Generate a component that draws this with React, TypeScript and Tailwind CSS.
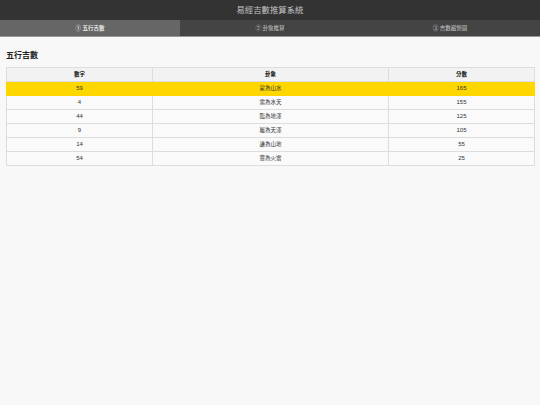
const TABS = ['① 五行吉數', '② 卦象推算', '③ 吉數趨勢圖'];

const ROWS = [
  { num: 59, gua: '蒙為山水', score: 165, top: true },
  { num: 4, gua: '需為水天', score: 155 },
  { num: 44, gua: '臨為地澤', score: 125 },
  { num: 9, gua: '履為天澤', score: 105 },
  { num: 14, gua: '謙為山地', score: 55 },
  { num: 54, gua: '豐為火雷', score: 25 },
];

const FONT = "font-['Liberation_Sans','Noto_Sans_CJK_TC',sans-serif]";

export default function App() {
  return (
    <div className={`${FONT} flex min-h-[405px] w-[540px] flex-col bg-[#f8f8f8]`}>
      <header className="flex h-5 items-center justify-center bg-[#333333] text-[8.4px] text-[#c4c4c4]">
        易經吉數推算系統
      </header>

      <nav className="grid h-[17px] grid-cols-3 border-b border-[#999999] bg-[#444444] text-[5.5px] text-[#c8c8c8]">
        {TABS.map((t, i) => (
          <div
            key={t}
            className={`flex items-center justify-center ${i === 0 ? 'bg-[#666666] font-bold text-[#e4e4e4]' : ''}`}
          >
            {t}
          </div>
        ))}
      </nav>

      <main className="px-[6px] pt-[13px]">
        <h2 className="text-[8px] leading-[11px] font-bold text-[#222222]">五行吉數</h2>

        <table className="mt-[6px] w-full table-fixed border-collapse border border-[#dddddd] text-center text-[5.5px] text-[#333333]">
          <colgroup>
            <col className="w-[146px]" />
            <col className="w-[236px]" />
            <col className="w-[146px]" />
          </colgroup>
          <thead>
            <tr className="h-[14px] bg-[#f2f2f2] font-bold text-[#111111]">
              <th className="border border-[#dddddd]">數字</th>
              <th className="border border-[#dddddd]">卦象</th>
              <th className="border border-[#dddddd]">分數</th>
            </tr>
          </thead>
          <tbody>
            {ROWS.map((r) => (
              <tr key={r.num} className={`h-[14px] ${r.top ? 'bg-[#ffd700]' : 'bg-[#fafafa]'}`}>
                <td className={`border ${r.top ? 'border-[#ffd700]' : 'border-[#dddddd]'} text-[6px]`}>{r.num}</td>
                <td className={`border ${r.top ? 'border-[#ffd700]' : 'border-[#dddddd]'}`}>{r.gua}</td>
                <td className={`border ${r.top ? 'border-[#ffd700]' : 'border-[#dddddd]'} text-[6px]`}>{r.score}</td>
              </tr>
            ))}
          </tbody>
        </table>
      </main>
    </div>
  );
}
